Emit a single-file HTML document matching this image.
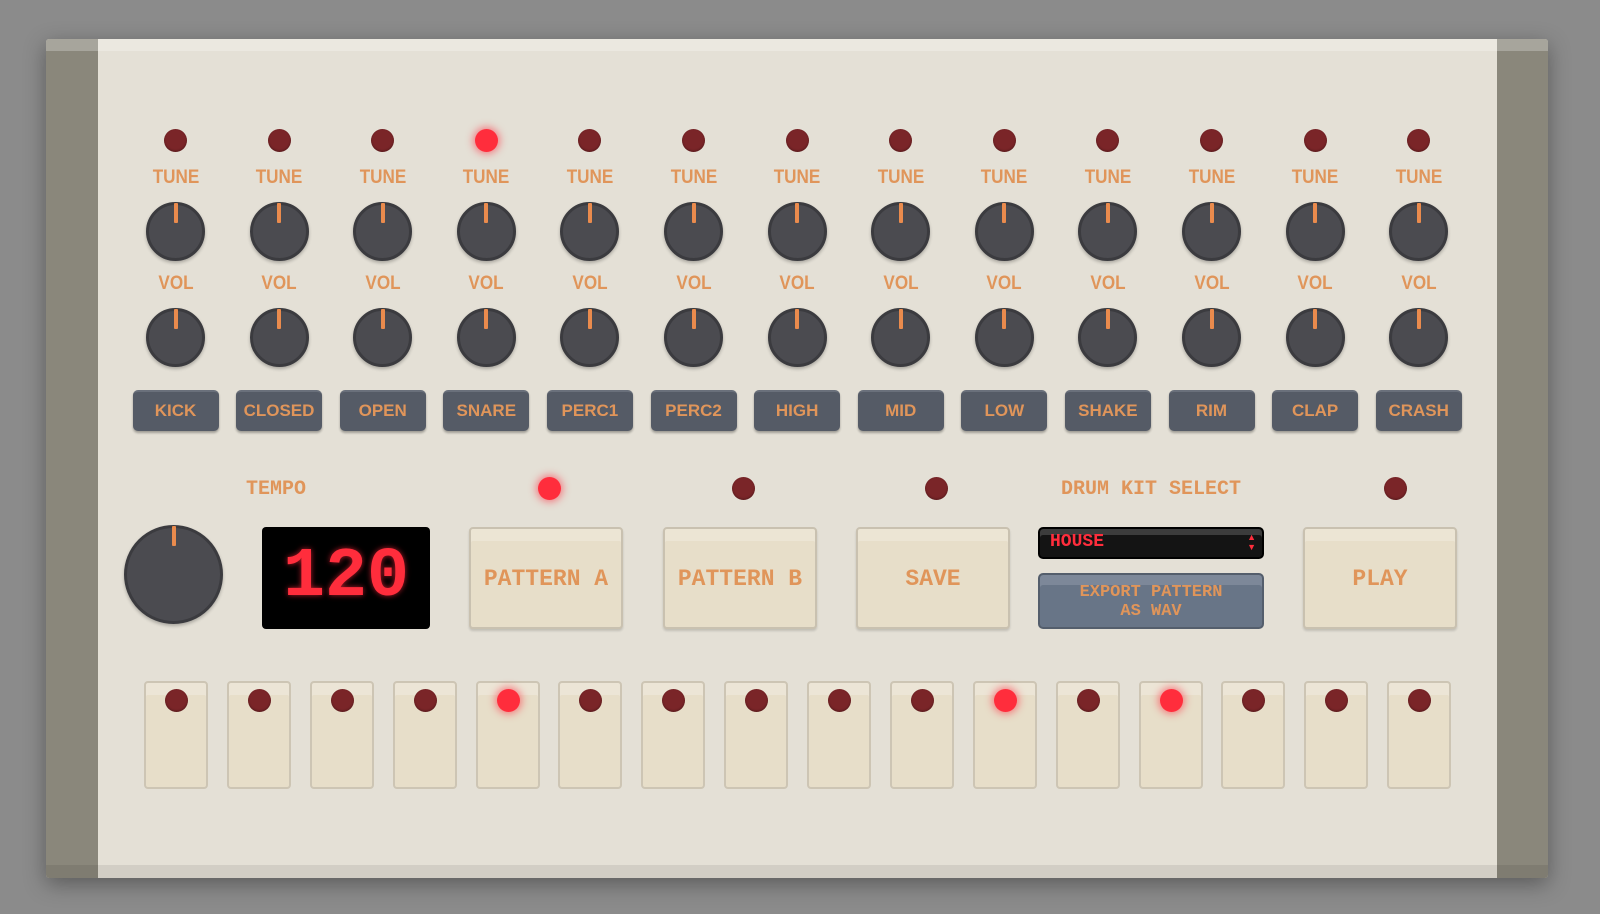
<!DOCTYPE html>
<html><head><meta charset="utf-8"><style>
*{box-sizing:border-box;margin:0;padding:0}
body{width:1600px;height:914px;background:#8b8b8b;position:relative;overflow:hidden;font-family:"Liberation Sans",sans-serif}
.panel{position:absolute;left:46px;top:39px;width:1502px;height:839px;background:#e4e0d6;box-shadow:0 6px 22px rgba(0,0,0,.35);border-radius:3px;overflow:hidden}
.woodL{position:absolute;left:0;top:0;width:52px;height:100%;background:#8a877b}
.woodR{position:absolute;right:0;top:0;width:51px;height:100%;background:#8a877b}
.topstrip{position:absolute;left:0;top:0;width:100%;height:12px;background:rgba(255,255,255,.25)}
.botstrip{position:absolute;left:0;bottom:0;width:100%;height:13px;background:rgba(0,0,0,.08)}
.col{position:absolute;top:0;width:104px;height:440px}
.led{position:absolute;width:23px;height:23px;border-radius:50%;background:#7a2528;box-shadow:inset 0 -1px 2px rgba(0,0,0,.3)}
.led.on{background:#ff2d3c;box-shadow:0 0 8px 2px rgba(255,40,60,.55)}
.col .led{left:40.5px;top:129px}
.lbl{position:absolute;left:0;width:104px;text-align:center;color:#e0955a;font-weight:bold;font-size:19px;transform:scaleX(.9)}
.knob{position:absolute;left:22.5px;width:59px;height:59px;border-radius:50%;background:#4b4b50;border:3px solid #3b3b3f;box-shadow:0 2px 3px rgba(0,0,0,.25)}
.knob:after{content:"";position:absolute;left:50%;top:-2px;width:4px;height:20px;margin-left:-2px;background:#ea8b4d;border-radius:1px}
.name{position:absolute;left:9px;top:390px;width:86px;height:41px;border-radius:5px;background:#555b66;border-top:2px solid #6a707b;box-shadow:0 2px 2px rgba(0,0,0,.3);color:#e0955a;font-weight:bold;font-size:17px;text-align:center;line-height:38px;font-family:"Liberation Sans",sans-serif}
.mono{font-family:"Liberation Mono",monospace;font-weight:bold;color:#e0955a}
.btn{position:absolute;top:527px;width:154px;height:102px;background:#e7dec9;border:2px solid #c9c1b0;border-radius:4px;box-shadow:inset 0 12px 0 #ece5d4,0 2px 2px rgba(0,0,0,.15);text-align:center;line-height:100px;font-size:23px}
.pad{position:absolute;top:681px;width:64px;height:108px;background:#e7dec9;border:2px solid #cdc5b4;border-radius:4px;box-shadow:inset 0 12px 0 #ece5d6}
.pad .led{left:19px;top:6px}
</style></head><body>
<div class="panel">
<div class="woodL"></div><div class="woodR"></div><div class="topstrip"></div><div class="botstrip"></div>
</div>

<div class="col" style="left:123.5px"><div class="led"></div><div class="lbl" style="top:167px">TUNE</div><div class="knob" style="top:202px"></div><div class="lbl" style="top:273px">VOL</div><div class="knob" style="top:308px"></div><div class="name">KICK</div></div>
<div class="col" style="left:227px"><div class="led"></div><div class="lbl" style="top:167px">TUNE</div><div class="knob" style="top:202px"></div><div class="lbl" style="top:273px">VOL</div><div class="knob" style="top:308px"></div><div class="name">CLOSED</div></div>
<div class="col" style="left:330.7px"><div class="led"></div><div class="lbl" style="top:167px">TUNE</div><div class="knob" style="top:202px"></div><div class="lbl" style="top:273px">VOL</div><div class="knob" style="top:308px"></div><div class="name">OPEN</div></div>
<div class="col" style="left:434.3px"><div class="led on"></div><div class="lbl" style="top:167px">TUNE</div><div class="knob" style="top:202px"></div><div class="lbl" style="top:273px">VOL</div><div class="knob" style="top:308px"></div><div class="name">SNARE</div></div>
<div class="col" style="left:537.9px"><div class="led"></div><div class="lbl" style="top:167px">TUNE</div><div class="knob" style="top:202px"></div><div class="lbl" style="top:273px">VOL</div><div class="knob" style="top:308px"></div><div class="name">PERC1</div></div>
<div class="col" style="left:641.5px"><div class="led"></div><div class="lbl" style="top:167px">TUNE</div><div class="knob" style="top:202px"></div><div class="lbl" style="top:273px">VOL</div><div class="knob" style="top:308px"></div><div class="name">PERC2</div></div>
<div class="col" style="left:745.1px"><div class="led"></div><div class="lbl" style="top:167px">TUNE</div><div class="knob" style="top:202px"></div><div class="lbl" style="top:273px">VOL</div><div class="knob" style="top:308px"></div><div class="name">HIGH</div></div>
<div class="col" style="left:848.7px"><div class="led"></div><div class="lbl" style="top:167px">TUNE</div><div class="knob" style="top:202px"></div><div class="lbl" style="top:273px">VOL</div><div class="knob" style="top:308px"></div><div class="name">MID</div></div>
<div class="col" style="left:952.3px"><div class="led"></div><div class="lbl" style="top:167px">TUNE</div><div class="knob" style="top:202px"></div><div class="lbl" style="top:273px">VOL</div><div class="knob" style="top:308px"></div><div class="name">LOW</div></div>
<div class="col" style="left:1055.9px"><div class="led"></div><div class="lbl" style="top:167px">TUNE</div><div class="knob" style="top:202px"></div><div class="lbl" style="top:273px">VOL</div><div class="knob" style="top:308px"></div><div class="name">SHAKE</div></div>
<div class="col" style="left:1159.5px"><div class="led"></div><div class="lbl" style="top:167px">TUNE</div><div class="knob" style="top:202px"></div><div class="lbl" style="top:273px">VOL</div><div class="knob" style="top:308px"></div><div class="name">RIM</div></div>
<div class="col" style="left:1263.1px"><div class="led"></div><div class="lbl" style="top:167px">TUNE</div><div class="knob" style="top:202px"></div><div class="lbl" style="top:273px">VOL</div><div class="knob" style="top:308px"></div><div class="name">CLAP</div></div>
<div class="col" style="left:1366.7px"><div class="led"></div><div class="lbl" style="top:167px">TUNE</div><div class="knob" style="top:202px"></div><div class="lbl" style="top:273px">VOL</div><div class="knob" style="top:308px"></div><div class="name">CRASH</div></div>

<div class="mono" style="position:absolute;left:226px;top:478px;width:100px;text-align:center;font-size:20px">TEMPO</div>
<div class="knob" style="left:124px;top:525px;width:99px;height:99px"></div>
<div style="position:absolute;left:262px;top:527px;width:168px;height:102px;background:#000;border-radius:4px;color:#ff2d3c;font-family:'Liberation Mono',monospace;font-weight:bold;font-size:70px;text-align:center;line-height:102px;text-shadow:0 0 6px rgba(255,40,60,.7)">120</div>

<div class="led on" style="left:537.5px;top:476.5px"></div>
<div class="led" style="left:731.5px;top:476.5px"></div>
<div class="led" style="left:924.5px;top:476.5px"></div>
<div class="led" style="left:1383.5px;top:476.5px"></div>

<div class="btn mono" style="left:469px">PATTERN A</div>
<div class="btn mono" style="left:663px">PATTERN B</div>
<div class="btn mono" style="left:856px">SAVE</div>
<div class="btn mono" style="left:1303px">PLAY</div>

<div class="mono" style="position:absolute;left:1031px;top:478px;width:240px;text-align:center;font-size:20px">DRUM KIT SELECT</div>
<div style="position:absolute;left:1038px;top:527px;width:226px;height:32px;background:#141414;border:2px solid #000;border-radius:5px;box-shadow:inset 0 6px 0 #3c3c3c"><span style="position:absolute;left:10px;top:3px;color:#ff2d3c;font-family:'Liberation Mono',monospace;font-weight:bold;font-size:18px">HOUSE</span><span style="position:absolute;right:6px;top:3px;color:#ff2d3c;font-size:9px;line-height:10px">▲<br>▼</span></div>
<div class="mono" style="position:absolute;left:1038px;top:573px;width:226px;height:56px;background:#687587;border:2px solid #545e6c;border-radius:5px;box-shadow:inset 0 10px 0 #7d8899;text-align:center;font-size:17px;line-height:19px;padding-top:8px">EXPORT PATTERN<br>AS WAV</div>

<div class="pad" style="left:144px"><div class="led"></div></div>
<div class="pad" style="left:227px"><div class="led"></div></div>
<div class="pad" style="left:310px"><div class="led"></div></div>
<div class="pad" style="left:393px"><div class="led"></div></div>
<div class="pad" style="left:476px"><div class="led on"></div></div>
<div class="pad" style="left:558px"><div class="led"></div></div>
<div class="pad" style="left:641px"><div class="led"></div></div>
<div class="pad" style="left:724px"><div class="led"></div></div>
<div class="pad" style="left:807px"><div class="led"></div></div>
<div class="pad" style="left:890px"><div class="led"></div></div>
<div class="pad" style="left:973px"><div class="led on"></div></div>
<div class="pad" style="left:1056px"><div class="led"></div></div>
<div class="pad" style="left:1139px"><div class="led on"></div></div>
<div class="pad" style="left:1221px"><div class="led"></div></div>
<div class="pad" style="left:1304px"><div class="led"></div></div>
<div class="pad" style="left:1387px"><div class="led"></div></div>
</body></html>
